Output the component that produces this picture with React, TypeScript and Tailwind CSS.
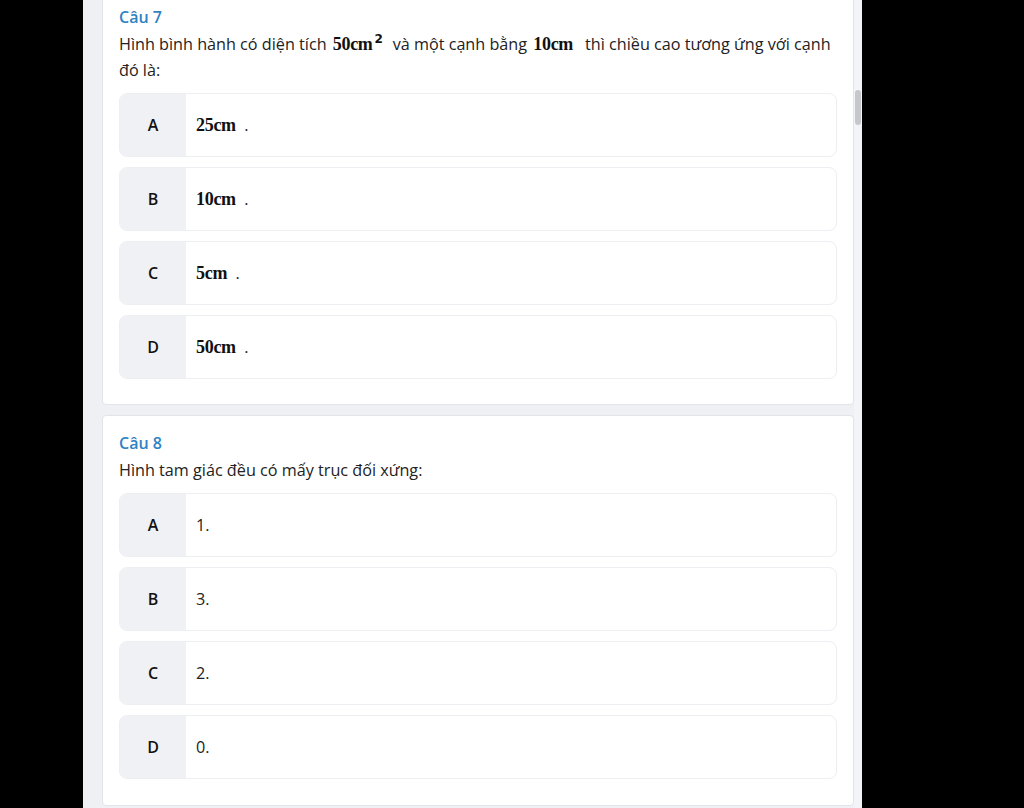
import React from "react";

const sans = { fontFamily: '"Open Sans", "Noto Sans", sans-serif' };

function M({ children, className = "" }: { children: React.ReactNode; className?: string }) {
  return (
    <span
      className={"inline-block font-bold text-[18px] leading-none text-[#111] tracking-[-0.3px] " + className}
      style={{ fontFamily: '"Liberation Serif", "DejaVu Serif", serif' }}
    >
      {children}
    </span>
  );
}

function Option({ letter, children }: { letter: string; children: React.ReactNode }) {
  return (
    <div className="flex h-[64px] overflow-hidden rounded-[8px] border border-[#eceef2] bg-white">
      <div className="flex w-[66px] shrink-0 items-center justify-center bg-[#f0f1f5] text-[16px] font-semibold text-[#111]">
        {letter}
      </div>
      <div className="flex items-center pl-[10px] text-[16.2px] text-[#222]">{children}</div>
    </div>
  );
}

function Card({
  title,
  question,
  options,
  last = false,
}: {
  title: string;
  question: React.ReactNode;
  options: [string, React.ReactNode][];
  last?: boolean;
}) {
  return (
    <div
      className={
        "rounded-[4px] border border-[#e2e4ea] bg-white px-[16px] pt-[15px] " + (last ? "pb-[26px]" : "pb-[25px]")
      }
    >
      <div className="text-[16px] font-semibold leading-6 text-[#2f82c3]">{title}</div>
      <div className="mt-[2px] text-[16.2px] leading-[26px] text-[#222]">{question}</div>
      <div className="mt-[10px] flex flex-col gap-[10px]">
        {options.map(([l, c]) => (
          <Option key={l} letter={l}>
            {c}
          </Option>
        ))}
      </div>
    </div>
  );
}

export default function App() {
  return (
    <div className="flex h-[808px] w-[1024px] overflow-hidden bg-black" style={sans}>
      <div className="ml-[83px] flex h-full w-[779px] bg-[#eef0f4]">
        <div className="flex-1 overflow-hidden pl-[19px]">
          <div className="-mt-[11px] flex flex-col gap-[10px]">
            <Card
              title="Câu 7"
              question={
                <>
                  Hình bình hành có diện tích{" "}
                  <M className="ml-[2px]">
                    50cm
                    <span
                      className="relative -top-[7px] ml-[2px] text-[12px] font-bold"
                      style={{ fontFamily: '"DejaVu Sans", sans-serif' }}
                    >
                      2
                    </span>
                  </M>
                  <span className="inline-block w-[10px]" />
                  và một cạnh bằng <M className="ml-[2px]">10cm</M>
                  <span className="inline-block w-[12px]" />
                  thì chiều cao tương ứng với cạnh đó là:
                </>
              }
              options={[
                ["A", <><M>25cm</M>&nbsp;&nbsp;.</>],
                ["B", <><M>10cm</M>&nbsp;&nbsp;.</>],
                ["C", <><M>5cm</M>&nbsp;&nbsp;.</>],
                ["D", <><M>50cm</M>&nbsp;&nbsp;.</>],
              ]}
            />
            <Card
              title="Câu 8"
              last
              question="Hình tam giác đều có mấy trục đối xứng:"
              options={[
                ["A", "1."],
                ["B", "3."],
                ["C", "2."],
                ["D", "0."],
              ]}
            />
          </div>
        </div>
        <div className="flex w-[8px] flex-col items-center bg-[#f3f4f7]">
          <div className="mt-[90px] h-[35px] w-[6px] rounded-full bg-[#c6c7cb]" />
        </div>
      </div>
    </div>
  );
}
